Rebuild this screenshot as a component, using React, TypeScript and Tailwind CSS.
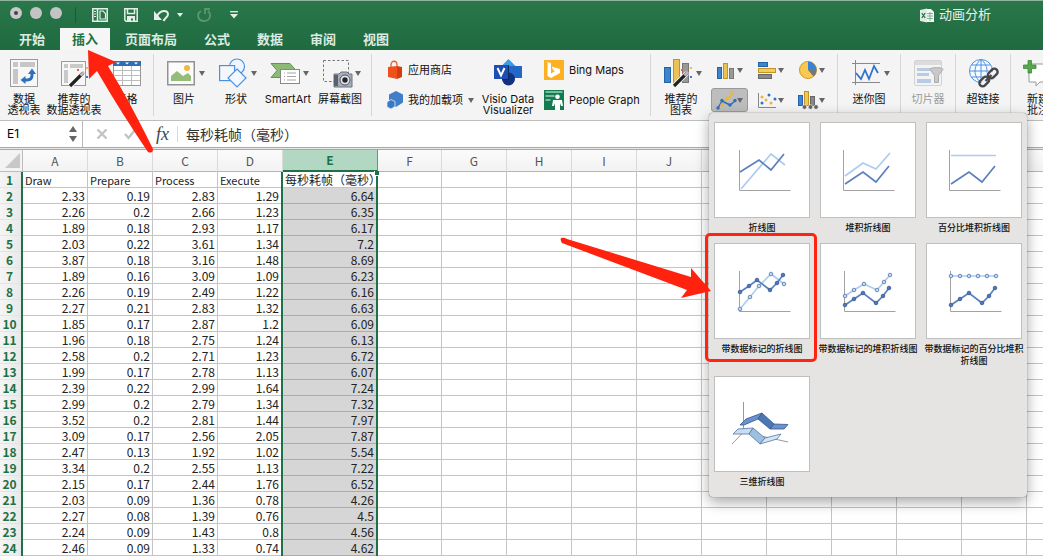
import React from "react";

type Kids = { children?: React.ReactNode };

const rows: string[][] = [
  ["2.33", "0.19", "2.83", "1.29", "6.64"],
  ["2.26", "0.2", "2.66", "1.23", "6.35"],
  ["1.89", "0.18", "2.93", "1.17", "6.17"],
  ["2.03", "0.22", "3.61", "1.34", "7.2"],
  ["3.87", "0.18", "3.16", "1.48", "8.69"],
  ["1.89", "0.16", "3.09", "1.09", "6.23"],
  ["2.26", "0.19", "2.49", "1.22", "6.16"],
  ["2.27", "0.21", "2.83", "1.32", "6.63"],
  ["1.85", "0.17", "2.87", "1.2", "6.09"],
  ["1.96", "0.18", "2.75", "1.24", "6.13"],
  ["2.58", "0.2", "2.71", "1.23", "6.72"],
  ["1.99", "0.17", "2.78", "1.13", "6.07"],
  ["2.39", "0.22", "2.99", "1.64", "7.24"],
  ["2.99", "0.2", "2.79", "1.34", "7.32"],
  ["3.52", "0.2", "2.81", "1.44", "7.97"],
  ["3.09", "0.17", "2.56", "2.05", "7.87"],
  ["2.47", "0.13", "1.92", "1.02", "5.54"],
  ["3.34", "0.2", "2.55", "1.13", "7.22"],
  ["2.15", "0.17", "2.44", "1.76", "6.52"],
  ["2.03", "0.09", "1.36", "0.78", "4.26"],
  ["2.27", "0.08", "1.39", "0.76", "4.5"],
  ["2.24", "0.09", "1.43", "0.8", "4.56"],
  ["2.46", "0.09", "1.33", "0.74", "4.62"],
];
const titles = ["Draw", "Prepare", "Process", "Execute", "每秒耗帧（毫秒）"];
const letters = "ABCDEFGHIJKLMNO".split("").concat("");
const emptyCols = letters.slice(5);

function Caret() {
  return (
    <svg className="h-[5px] w-[6px] shrink-0" viewBox="0 0 6 5">
      <path d="M0 0h6L3 5z" fill="#666" />
    </svg>
  );
}

function Svg({ children, w = "w-7", box = "0 0 28 28" }: Kids & { w?: string; box?: string }) {
  return (
    <svg className={`${w} shrink-0 overflow-visible`} viewBox={box} fill="none">
      {children}
    </svg>
  );
}

function BigButton({ icon, lines, caret, width, dim }: { icon: React.ReactNode; lines: string[]; caret?: boolean; width: string; dim?: boolean }) {
  return (
    <button className={`flex shrink-0 flex-col items-center pt-[9px] ${width} ${dim ? "text-[#9a9a9a]" : "text-[#111]"}`}>
      <span className={`flex h-7 items-center gap-1 ${caret ? "pl-1" : ""}`}>
        {icon}
        {caret && <Caret />}
      </span>
      <span className="mt-[7px] block text-[11px] leading-[11px] whitespace-nowrap">
        {lines.map((l) => (
          <span key={l} className="block">{l}</span>
        ))}
      </span>
    </button>
  );
}

function Separator() {
  return <div className="my-1 w-px shrink-0 bg-[#d6d6d6]" />;
}

const wand = (
  <g>
    <path d="M10 27 23 14" stroke="#fff" strokeWidth="5" />
    <path d="M10 27 23 14" stroke="#222" strokeWidth="3.2" />
    <path d="M20.5 16.5 24 13" stroke="#bbb" strokeWidth="3" />
    <path d="M17 10h2v2h-2z" fill="#ee5a52" />
    <path d="M26 8h2v2h-2z" fill="#f5b94a" />
    <path d="M26 17h2v2h-2z" fill="#3d7cc9" />
  </g>
);

const PivotIcon = (
  <Svg>
    <rect x=".5" y=".5" width="27" height="27" fill="#f7f7f7" stroke="#9b9b9b" />
    <path d="M3 3h5v5H3zM10 3h15v5H10zM3 10h5v15H3z" fill="#c6c6c6" />
    <path d="M14 21h3c3.5 0 5-2 5-5v-2" stroke="#2e70bd" strokeWidth="3" />
    <path d="M10.500 21l5-4v8zM22 9.500l-4 5.500h8z" fill="#2e70bd" />
  </Svg>
);
const PivotRecIcon = (
  <Svg>
    <rect x="1.500" y="2.500" width="24" height="24" fill="#f7f7f7" stroke="#9b9b9b" />
    <path d="M4 5h4v4H4zM10 5h13v4H10zM4 11h4v13H4z" fill="#c9c9c9" />
    {wand}
  </Svg>
);
const TableIcon = (
  <Svg>
    <rect x=".5" y="2.500" width="27" height="24" fill="#fff" stroke="#999" />
    <path d="M0 2h28v5H0z" fill="#2e6db8" />
    <path d="M3 3.500h4l-2 2zM12 3.500h4l-2 2zM21 3.500h4l-2 2z" fill="#fff" />
    <path d="M1 11.500h26M1 16.500h26M1 21.500h26M9.500 7v19M18.500 7v19" stroke="#bdbdbd" />
  </Svg>
);
const PictureIcon = (
  <Svg>
    <rect x=".75" y="2.750" width="26.500" height="23" fill="#fcfcfc" stroke="#929292" strokeWidth="1.500" />
    <path d="M4 22v-5l6-5 6 5 5-3 3 3v5z" fill="#93bd79" />
    <circle cx="20" cy="9" r="3" fill="#eeb93f" />
  </Svg>
);
const ShapesIcon = (
  <Svg>
    <circle cx="18" cy="7.500" r="7.500" fill="#eef5fd" stroke="#4a90e2" strokeWidth="1.200" />
    <rect x=".6" y="6.600" width="15" height="15" fill="#f4f8fe" stroke="#4a90e2" strokeWidth="1.200" />
    <path d="M18 10l9 9-9 9-9-9z" fill="#f4f8fe" stroke="#4a90e2" strokeWidth="1.200" />
  </Svg>
);
const SmartIcon = (
  <Svg>
    <path d="M0 4.500h19l7 8-7 6H0l6-7z" fill="#8aba76" stroke="#5e9550" />
    <rect x="9.500" y="10.500" width="19" height="14" fill="#fff" stroke="#888" />
    <path d="M13 14h1M13 17.500h1M13 21h1M16 14h9M16 17.500h9M16 21h9" stroke="#a5a5a5" />
  </Svg>
);
const ScreenshotIcon = (
  <Svg>
    <rect x=".5" y="1.500" width="25" height="21" stroke="#777" strokeDasharray="2.500 2" />
    <path d="M12 15h4l2-2h6l2 2h3v13H11V15z" fill="#a7adbb" stroke="#6d7380" />
    <path d="M11 16h4v11h-4z" fill="#59606e" />
    <circle cx="22" cy="21" r="5" fill="#e8e8ec" stroke="#4f5563" />
    <circle cx="22" cy="21" r="2.700" fill="#24262c" />
  </Svg>
);
const VisioIcon = (
  <Svg>
    <path d="M14.500 0 22 7.500 14.500 15 7 7.500z" fill="#3a9aec" />
    <path d="M14 7h14v12H14z" fill="#2368c8" />
    <circle cx="14.500" cy="20" r="6.500" fill="#12317f" />
    <path d="M14 6h1v15H8z" fill="#0b2a66" />
    <rect y="6" width="14" height="14" rx=".5" fill="#1c4eb4" />
    <path d="M3.500 9 7 16.500 10.500 9" stroke="#fff" strokeWidth="2" />
  </Svg>
);
const RecChartIcon = (
  <Svg>
    <rect x=".5" y="8.500" width="6" height="15" fill="#3f83cf" stroke="#2563a8" />
    <rect x="9.500" y=".5" width="6" height="23" fill="#edc254" stroke="#c19426" />
    <rect x="18.500" y="4.500" width="6" height="19" fill="#999" stroke="#777" />
    {wand}
  </Svg>
);
const SparkIcon = (
  <Svg>
    <path d="M0 4.500h28M0 23.500h28M3.500 1v25" stroke="#888" />
    <path d="m4 14 5 6 4-9 4 9 5-13 4 7" stroke="#2f74cc" strokeWidth="1.800" />
  </Svg>
);
const SlicerIcon = (
  <Svg>
    <rect x=".5" y="1.500" width="27" height="25" rx="1.500" fill="#f3f3f3" stroke="#d2d2d2" />
    <path d="M1 2h26v4H1z" fill="#dcdcdc" />
    <path d="M3 9h16v3H3zM3 14h12v3H3zM3 20h14v4H3z" fill="#b8cbe4" />
    <path d="M16 10.500c0-2.500 13-2.500 13 0l-4.500 6v7h-4v-7z" fill="#c9c9c9" stroke="#aaa" />
  </Svg>
);
const LinkIcon = (
  <Svg>
    <circle cx="12" cy="12" r="11.500" fill="#f6faff" stroke="#4a90e2" />
    <path d="M.5 12h23M2.500 6h19M2.500 18h19M12 .5v23M12 .5c-8 6-8 17 0 23M12 .5c8 6 8 17 0 23" stroke="#4a90e2" />
    <path d="m14 25 11-11" stroke="#f4f4f4" strokeWidth="11" />
    <g stroke="#45474d" strokeWidth="2.400">
      <rect x="20.500" y="9" width="6.500" height="11" rx="3.200" transform="rotate(45 23.750 14.500)" />
      <rect x="12" y="17" width="6.500" height="11" rx="3.200" transform="rotate(45 15.250 22.500)" />
      <path d="m16.500 22 6-6" />
    </g>
  </Svg>
);
const CommentIcon = (
  <Svg>
    <path d="M7 5h28v18H16l-4 4v-4H5V10" fill="#fff" stroke="#999" />
    <path d="M4 1.500h3.500V6H12v3.500H7.500V14H4V9.500H-.5V6H4z" fill="#55a84c" stroke="#3b8a36" strokeWidth=".8" />
  </Svg>
);

const StoreIcon = (
  <Svg w="w-4" box="0 0 16 20">
    <path d="M4 8V5c0-5 6-5 6 0v3" stroke="#e8622d" strokeWidth="1.300" />
    <path d="m1 7 9-1v13l-9-2z" fill="#f0501b" />
    <path d="m10 6 5 1v10l-5 2z" fill="#d33c0d" />
  </Svg>
);
const AddinIcon = (
  <Svg w="w-4" box="0 0 16 18">
    <path d="m9 0 7 3.500v8L9 16l-7-4V3.500z" fill="#3f7fc9" />
    <path d="m4 8.500 4 2v5L4 18l-4-2v-5z" fill="#3b78c3" stroke="#e2edf9" strokeWidth=".8" />
  </Svg>
);
const BingIcon = (
  <Svg w="w-5" box="0 0 20 20">
    <path d="M0 0h20v20H0z" fill="#fdb022" />
    <path d="m3.500 2 3.500 1v10.500l4-2.500-2-1-1.200-3.500L16 9v4l-9 5-3.500-2z" fill="#fff" />
  </Svg>
);
const PeopleIcon = (
  <Svg w="w-5" box="0 0 20 20">
    <path d="M0 0h20v20H0z" fill="#147a50" />
    <path d="M1.500 2h17M1.500 6h9M1.500 10h5" stroke="#9fd0b9" strokeWidth="1.500" />
    <circle cx="13.500" cy="6.800" r="2.300" fill="#fff" />
    <path d="M9 10h9l1 6h-2l-1-3v7h-5v-7l-1 3H8z" fill="#fff" />
  </Svg>
);

function SmallItem({ icon, label, caret }: { icon: React.ReactNode; label: string; caret?: boolean }) {
  return (
    <button className="flex h-[30px] items-center gap-[5px] text-[11px] whitespace-nowrap text-[#111]">
      {icon}
      <span>{label}</span>
      {caret && <Caret />}
    </button>
  );
}

const chartIcons: { name: string; art: React.ReactNode; pressed?: boolean }[] = [
  {
    name: "柱形图",
    art: (
      <g>
        <rect x=".5" y="6.500" width="4" height="11" fill="#3f83cf" stroke="#2563a8" />
        <rect x="6.500" y="2.500" width="4" height="15" fill="#edc254" stroke="#c19426" />
        <rect x="12.500" y="7.500" width="4" height="10" fill="#999" stroke="#777" />
      </g>
    ),
  },
  {
    name: "条形图",
    art: (
      <g>
        <rect x=".5" y="1.500" width="9" height="4" fill="#3f83cf" stroke="#2563a8" />
        <rect x=".5" y="7.500" width="17" height="4" fill="#f6cb5e" stroke="#c19426" />
        <rect x=".5" y="13.500" width="13" height="4" fill="#8a8a8a" stroke="#666" />
      </g>
    ),
  },
  {
    name: "饼图",
    art: (
      <g>
        <circle cx="9" cy="9" r="8.500" fill="#fbc94f" stroke="#c99b2e" />
        <path d="M9 9V.5A8.500 8.500 0 0 1 17.500 9z" fill="#3b82d4" />
        <path d="M9 9h8.500a8.500 8.500 0 0 1-3 6.500z" fill="#777" />
      </g>
    ),
  },
  {
    name: "折线图菜单",
    pressed: true,
    art: (
      <g>
        <path d="m5 14 4-5 2-1 4-5" stroke="#eab63c" strokeWidth="1.500" />
        <path d="m1 17 4-7 8 4 5-4" stroke="#2e6fbd" strokeWidth="1.500" />
        <g fill="#eab63c"><circle cx="5" cy="14" r="1.700" /><circle cx="10" cy="7" r="1.700" /><circle cx="15" cy="2" r="1.700" /></g>
        <g fill="#2e6fbd"><circle cx="1" cy="17" r="1.700" /><circle cx="5" cy="9.500" r="1.700" /><circle cx="13" cy="14" r="1.700" /><circle cx="18" cy="9.500" r="1.700" /></g>
      </g>
    ),
  },
  {
    name: "散点图",
    art: (
      <g>
        <path d="M.5 2v14.500H18" stroke="#888" />
        <g fill="#e9b53a"><circle cx="4" cy="6" r="1.500" /><circle cx="8" cy="9" r="1.500" /><circle cx="13" cy="12" r="1.500" /></g>
        <g fill="#2f74cc"><circle cx="4" cy="12" r="1.500" /><circle cx="11" cy="4" r="1.500" /><circle cx="17" cy="8" r="1.500" /></g>
      </g>
    ),
  },
  {
    name: "组合图",
    art: (
      <g>
        <rect x="-.5" y="4.500" width="4" height="10" fill="#3f83e0" stroke="#2563a8" />
        <rect x="5.500" y=".5" width="4" height="14" fill="#f3c656" stroke="#c19426" />
        <rect x="11.500" y="5.500" width="4" height="9" fill="#888" stroke="#666" />
        <g fill="#666" stroke="#f4f4f4" strokeWidth=".6"><circle cx="5.500" cy="16" r="2.300" /><circle cx="11.500" cy="16" r="2.300" /><circle cx="17" cy="16" r="2.300" /></g>
      </g>
    ),
  },
];

type P = [number, number];
const pts = (a: P[]) => a.map((p) => p.join(",")).join(" ");

function LineArt({ light, dark, dots, ax = 25 }: { light: P[]; dark: P[]; dots?: boolean; ax?: number }) {
  return (
    <svg className="h-full w-full" viewBox="0 0 94 94" fill="none">
      <path d={`M${ax - 0.5} 27v40.500h51`} stroke="#a2a2a2" />
      <polyline points={pts(light)} stroke="#abcdf0" strokeWidth="1.700" />
      <polyline points={pts(dark)} stroke="#5b80bd" strokeWidth="1.700" />
      {dots && light.map((p) => <circle key={p.join()} cx={p[0]} cy={p[1]} r="1.800" fill="#c3daf3" stroke="#5d80b5" strokeWidth=".9" />)}
      {dots && dark.map((p) => <circle key={p.join()} cx={p[0]} cy={p[1]} r="1.800" fill="#5079ba" stroke="#3c5f98" strokeWidth=".9" />)}
    </svg>
  );
}

const tiles: { label: string; art: React.ReactNode }[] = [
  { label: "折线图", art: <LineArt light={[[26, 66], [56, 31], [70, 42]]} dark={[[25, 49], [44, 37], [56, 47], [69, 31]]} /> },
  { label: "堆积折线图", art: <LineArt ax={23} light={[[24, 53], [42, 40], [55, 46], [69, 30]]} dark={[[24, 61], [42, 49], [55, 59], [68, 43]]} /> },
  { label: "百分比堆积折线图", art: <LineArt ax={23} light={[[24, 32.5], [69, 32.5]]} dark={[[24, 61], [42, 49], [55, 59], [68, 43]]} /> },
  { label: "带数据标记的折线图", art: <LineArt dots light={[[25, 65], [35, 53], [44, 42], [56, 30], [69, 40]]} dark={[[25, 48], [34, 42], [42, 36], [55, 46], [62, 39], [68, 31]]} /> },
  { label: "带数据标记的堆积折线图", art: <LineArt ax={24} dots light={[[24, 52], [33, 46], [43, 40], [56, 46], [63, 38], [69, 31]]} dark={[[24, 61], [33, 55], [42, 49], [55, 59], [62, 52], [68, 44]]} /> },
  { label: "带数据标记的百分比堆积折线图", art: <LineArt ax={24} dots light={[[24, 32], [33, 32], [42, 32], [51, 32], [60, 32], [69, 32]]} dark={[[24, 61], [33, 55], [42, 49], [55, 59], [62, 52], [68, 44]]} /> },
  {
    label: "三维折线图",
    art: (
      <svg className="h-full w-full" viewBox="0 0 94 94" fill="none" strokeLinejoin="round">
        <path d="M28.500 25v30L17 67M28 55l45 10" stroke="#999" />
        <path d="m25 48 6-6 16-6-4 6-14 6z" fill="#6a92cf" stroke="#35558a" strokeWidth=".8" />
        <path d="m47 36 12 11-4 5-12-10z" fill="#4c76b4" stroke="#35558a" strokeWidth=".8" />
        <path d="m59 47 14 .5-4 4.500H55z" fill="#6a92cf" stroke="#35558a" strokeWidth=".8" />
        <path d="m18 57 5-5 15-1-4 6z" fill="#c8ddf4" stroke="#55779f" strokeWidth=".8" />
        <path d="m38 51 12 10-5 6-11-10z" fill="#9cc0df" stroke="#55779f" strokeWidth=".8" />
        <path d="m50 61 16-4-4 5-17 5z" fill="#d5e6f8" stroke="#55779f" strokeWidth=".8" />
      </svg>
    ),
  },
];

function TitleBar() {
  return (
    <div className="flex h-7 items-center pl-[10px]">
      <div className="-mt-1 flex gap-2">
        <button aria-label="关闭" className="grid size-3 place-items-center rounded-full bg-[#c9c9c9]"><span className="size-1 rounded-full bg-[#444]" /></button>
        <button aria-label="最小化" className="size-3 rounded-full bg-[#c4c4c4]" />
        <button aria-label="缩放" className="size-3 rounded-full bg-[#c4c4c4]" />
      </div>
      <div className="ml-[13px] h-4 w-px bg-[#1b5a38]" />
      <button aria-label="模板" className="ml-4">
        <Svg w="w-4" box="0 0 16 14">
          <path d="M.8.800h14.400v12.400H.8zM5.500.800v12.400" stroke="#e4efe8" strokeWidth="1.500" />
          <path d="M2 3.500h2M2 6h2M2 8.500h2" stroke="#e4efe8" />
          <path d="M8 3h3l2.500 2.500V11H8z" stroke="#e4efe8" strokeWidth="1.200" />
        </Svg>
      </button>
      <button aria-label="保存" className="ml-4">
        <Svg w="w-[14px]" box="0 0 14 14">
          <path d="M.8.800h12.400v12.400H2L.8 12zM3.500 1v4.500h7V1" stroke="#e4efe8" strokeWidth="1.500" />
          <path d="M3 8h8v6H9v-3.500H7V14H3z" fill="#e4efe8" />
        </Svg>
      </button>
      <button aria-label="撤销" className="ml-4 flex items-center gap-[7px]">
        <Svg w="w-4" box="0 0 16 14">
          <path d="M3 8c3-6 11-7 11-1.500 0 2.500-3 3-4.500 6.500" stroke="#e4efe8" strokeWidth="2" />
          <path d="M0 3v9h8z" fill="#e4efe8" />
        </Svg>
        <svg className="h-1 w-[6px]" viewBox="0 0 6 4"><path d="M0 0h6L3 4z" fill="#e4efe8" /></svg>
      </button>
      <button aria-label="重做" className="ml-[14px]">
        <Svg w="w-[14px]" box="0 0 14 14">
          <path d="M4 3C-1 6 1 13 7 13s8-6 4-10" stroke="#5d9573" strokeWidth="1.800" />
          <path d="M13 1H8v5" stroke="#5d9573" strokeWidth="1.800" />
        </Svg>
      </button>
      <button aria-label="自定义" className="ml-[18px]">
        <Svg w="w-[10px]" box="0 0 10 8">
          <path d="M1 .7h8" stroke="#e4efe8" strokeWidth="1.300" />
          <path d="M1 3h8L5 7.500z" fill="#e4efe8" />
        </Svg>
      </button>
      <div className="mr-[52px] ml-auto flex items-center gap-[5px] text-[13px] text-[#e9f1ec]">
        <Svg w="w-[14px]" box="0 0 14 15">
          <path d="M5 1h6l3 3v10H5z" fill="#f4f8f5" />
          <path d="M7 5.500h6M7 8h6M7 10.500h6M10 4v9" stroke="#6a9f80" strokeWidth=".8" />
          <path d="m0 2 7-1.500v14L0 13z" fill="#dfece4" />
          <path d="m1.800 5 3.400 5M5.200 5l-3.400 5" stroke="#226b43" strokeWidth="1.200" />
        </Svg>
        <span>动画分析</span>
      </div>
    </div>
  );
}

export default function App() {
  const tabs = ["开始", "插入", "页面布局", "公式", "数据", "审阅", "视图"];
  return (
    <div className="relative min-h-screen overflow-hidden bg-white font-['Inter','Noto_Sans_CJK_SC',sans-serif]">
      <header className="border-t border-[#8fb39d] bg-linear-to-b from-[#2a774b] to-[#1f6a40]">
        <TitleBar />
        <nav className="-mt-px flex h-[22px] gap-[3px] pl-[7px]">
          {tabs.map((t) => (
            <button
              key={t}
              className={`px-3 text-[13px] leading-5 font-bold whitespace-nowrap ${t === "插入" ? "bg-[#f6f6f6] text-[#217346]" : "text-[#dcebe2]"}`}
            >
              {t}
            </button>
          ))}
        </nav>
      </header>

      <div className="flex h-[71px] overflow-hidden border-b border-[#bdbdbd] bg-[#f4f4f4]">
        <BigButton width="w-12" icon={PivotIcon} lines={["数据", "透视表"]} />
        <BigButton width="w-[52px]" icon={PivotRecIcon} lines={["推荐的", "数据透视表"]} />
        <BigButton width="w-[53px]" icon={TableIcon} lines={["表格"]} />
        <Separator />
        <div className="flex shrink-0 px-1">
          <BigButton width="w-[52px]" caret icon={PictureIcon} lines={["图片"]} />
          <BigButton width="w-[52px]" caret icon={ShapesIcon} lines={["形状"]} />
          <BigButton width="w-[52px]" caret icon={SmartIcon} lines={["SmartArt"]} />
          <BigButton width="w-[52px]" caret icon={ScreenshotIcon} lines={["屏幕截图"]} />
        </div>
        <div className="w-px shrink-0" />
        <Separator />
        <div className="flex w-[278px] shrink-0 pl-[15px]">
          <div className="w-[92px] pt-[5px]">
            <SmallItem icon={StoreIcon} label="应用商店" />
            <SmallItem icon={AddinIcon} label="我的加载项" caret />
          </div>
          <BigButton width="w-[58px]" icon={VisioIcon} lines={["Visio Data", "Visualizer"]} />
          <div className="pt-[5px] pl-[7px]">
            <SmallItem icon={BingIcon} label="Bing Maps" />
            <SmallItem icon={PeopleIcon} label="People Graph" />
          </div>
        </div>
        <Separator />
        <div className="flex w-[186px] shrink-0">
          <BigButton width="w-[60px]" caret icon={RecChartIcon} lines={["推荐的", "图表"]} />
          <div className="grid grid-cols-[41px_41px_41px] grid-rows-[30px_30px] items-center pt-[5px]">
            {chartIcons.map((c) => (
              <button
                key={c.name}
                aria-label={c.name}
                className={`flex h-6 w-[37px] items-center gap-[2px] rounded-[3px] border pl-[5px] ${c.pressed ? "border-[#9a9a9a] bg-[#bdbdbd]" : "border-transparent"}`}
              >
                <Svg w="w-[18px]" box="0 0 18 18">{c.art}</Svg>
                <Caret />
              </button>
            ))}
          </div>
        </div>
        <Separator />
        <BigButton width="w-[62px]" caret icon={SparkIcon} lines={["迷你图"]} />
        <Separator />
        <BigButton width="w-[54px]" dim icon={SlicerIcon} lines={["切片器"]} />
        <Separator />
        <BigButton width="w-[54px]" icon={LinkIcon} lines={["超链接"]} />
        <Separator />
        <BigButton width="w-[54px]" icon={CommentIcon} lines={["新建", "批注"]} />
      </div>

      <div className="flex h-[26px] items-center bg-white">
        <div className="flex h-full w-[83px] items-center border-r border-[#b9b9b9] pr-[5px] pl-[7px]">
          <input aria-label="名称框" defaultValue="E1" className="w-14 min-w-0 flex-1 bg-transparent text-[12px] outline-none" />
          <svg className="h-4 w-2" viewBox="0 0 8 16"><path d="M0 6h8L4 0zM0 10h8l-4 6z" fill="#666" /></svg>
        </div>
        <button aria-label="取消" className="ml-[13px]">
          <Svg w="w-3" box="0 0 12 12"><path d="m1.500 1.500 9 9m0-9-9 9" stroke="#c3c3c3" strokeWidth="2.400" /></Svg>
        </button>
        <button aria-label="输入" className="ml-4">
          <Svg w="w-3" box="0 0 12 12"><path d="m1 6 3.500 4L11 2" stroke="#c3c3c3" strokeWidth="2.400" /></Svg>
        </button>
        <label htmlFor="formula" className="ml-5 w-[22px] border-r border-[#d8d8d8] font-['Liberation_Serif',serif] text-[18px] leading-4 text-[#444] italic">fx</label>
        <input id="formula" defaultValue="每秒耗帧（毫秒）" className="min-w-0 flex-1 pl-2 text-[14px] text-[#333] outline-none" />
      </div>
      <div className="h-[3px] border-y border-[#a9a9a9] bg-[#e8e8e8]" />

      <table className="w-max table-fixed border-separate border-spacing-0 font-['Noto_Sans_CJK_SC',sans-serif] text-[#222]">
        <colgroup>
          <col className="w-[23px]" />
          <col className="w-[65px]" />
          <col className="w-[65px]" />
          <col className="w-[65px]" />
          <col className="w-[65px]" />
          <col className="w-[95px]" />
          <col className="w-16" />
          {emptyCols.slice(1).map((c) => (
            <col key={c} className="w-[65px]" />
          ))}
        </colgroup>
        <thead>
          <tr className="h-[22px]">
            <th className="border-r border-b border-[#bdbdbd] bg-[#f3f3f3] p-0">
              <svg className="ml-[5px] size-[15px]" viewBox="0 0 15 15"><path d="M15 0v15H0z" fill="#c8c8c8" /></svg>
            </th>
            {letters.map((l) =>
              l === "E" ? (
                <th key={l} className="border-r border-b-2 border-r-[#3fb15c] border-b-[#1e7145] bg-[#b2d8c3] p-0 text-[12px] leading-5 font-bold text-[#1e7145]">E</th>
              ) : (
                <th key={l} className="border-r border-b border-r-[#dadada] border-b-[#b5b5b5] bg-linear-to-b from-[#fbfbfb] to-[#f2f2f2] p-0 text-[12px] leading-5 font-normal text-[#555]">{l}</th>
              )
            )}
          </tr>
        </thead>
        <tbody className="text-[12px] leading-4">
          {[titles, ...rows].map((r, i) => (
            <tr key={i} className="h-4">
              <th className="border-r-2 border-r-[#1e7145] bg-linear-to-r from-[#f5f5f5] to-[#e9e9e9] p-0 pr-[2px] text-center font-bold text-[#1e7145] shadow-[inset_0_-1px_0_#e4e4e4]">{i + 1}</th>
              {r.map((v, c) => (
                <td
                  key={c}
                  className={`p-0 whitespace-nowrap ${i === 0 ? (c === 4 ? "pl-[2px]" : "pl-[2px] text-[11px]") : "pr-[2px] text-right"} ${
                    c >= 3 ? "border-r-2 border-r-[#1e7145]" : "border-r border-r-[#c4c4c4]"
                  } ${c === 4 && i > 0 ? "bg-[#d6d6d6] shadow-[inset_0_-1px_0_#ababab]" : "shadow-[inset_0_-1px_0_#c4c4c4]"}`}
                >
                  {i === 0 && c === 4 ? <span className="block w-[91px]">{v}</span> : v}
                </td>
              ))}
              {emptyCols.map((c) => (
                <td key={c} className="border-r border-b border-[#c4c4c4] p-0" />
              ))}
            </tr>
          ))}
        </tbody>
      </table>
      <span className="absolute top-[171px] left-[374px] size-[5px] border-b border-l border-white bg-[#1e7145]" />

      <div role="menu" className="absolute top-[113px] left-[709px] grid grid-cols-[106px_106px_106px] rounded-[4px] bg-[#e5e4e3] pt-[9px] shadow-[0_0_1px_rgba(0,0,0,0.7),0_5px_14px_rgba(0,0,0,0.35)]">
        {tiles.map((t) => (
          <button key={t.label} role="menuitem" className="flex flex-col items-center pb-[9px]">
            <span className="block size-24 border border-[#bfbfbf] bg-white">{t.art}</span>
            <span className="mt-1 text-[9px] leading-3 font-medium text-[#111]">{t.label}</span>
          </button>
        ))}
      </div>
      <div className="pointer-events-none absolute top-[233px] left-[705px] h-[129px] w-[112px] rounded-[5px] border-3 border-[#ff2412]" />

      <svg className="pointer-events-none absolute top-0 left-0 h-[556px] w-[1043px]" viewBox="0 0 1043 556" fill="#ff220e">
        <path d="M88 50 116 62 108 66Q130 102 153 149Q153 154 148 152Q122 114 97 71L89 79Z" />
        <path d="M561 238Q564 237 567 239L691 277 691 268 711 291 681 298 687 290 562 243Q560 240 561 238Z" />
      </svg>
    </div>
  );
}
